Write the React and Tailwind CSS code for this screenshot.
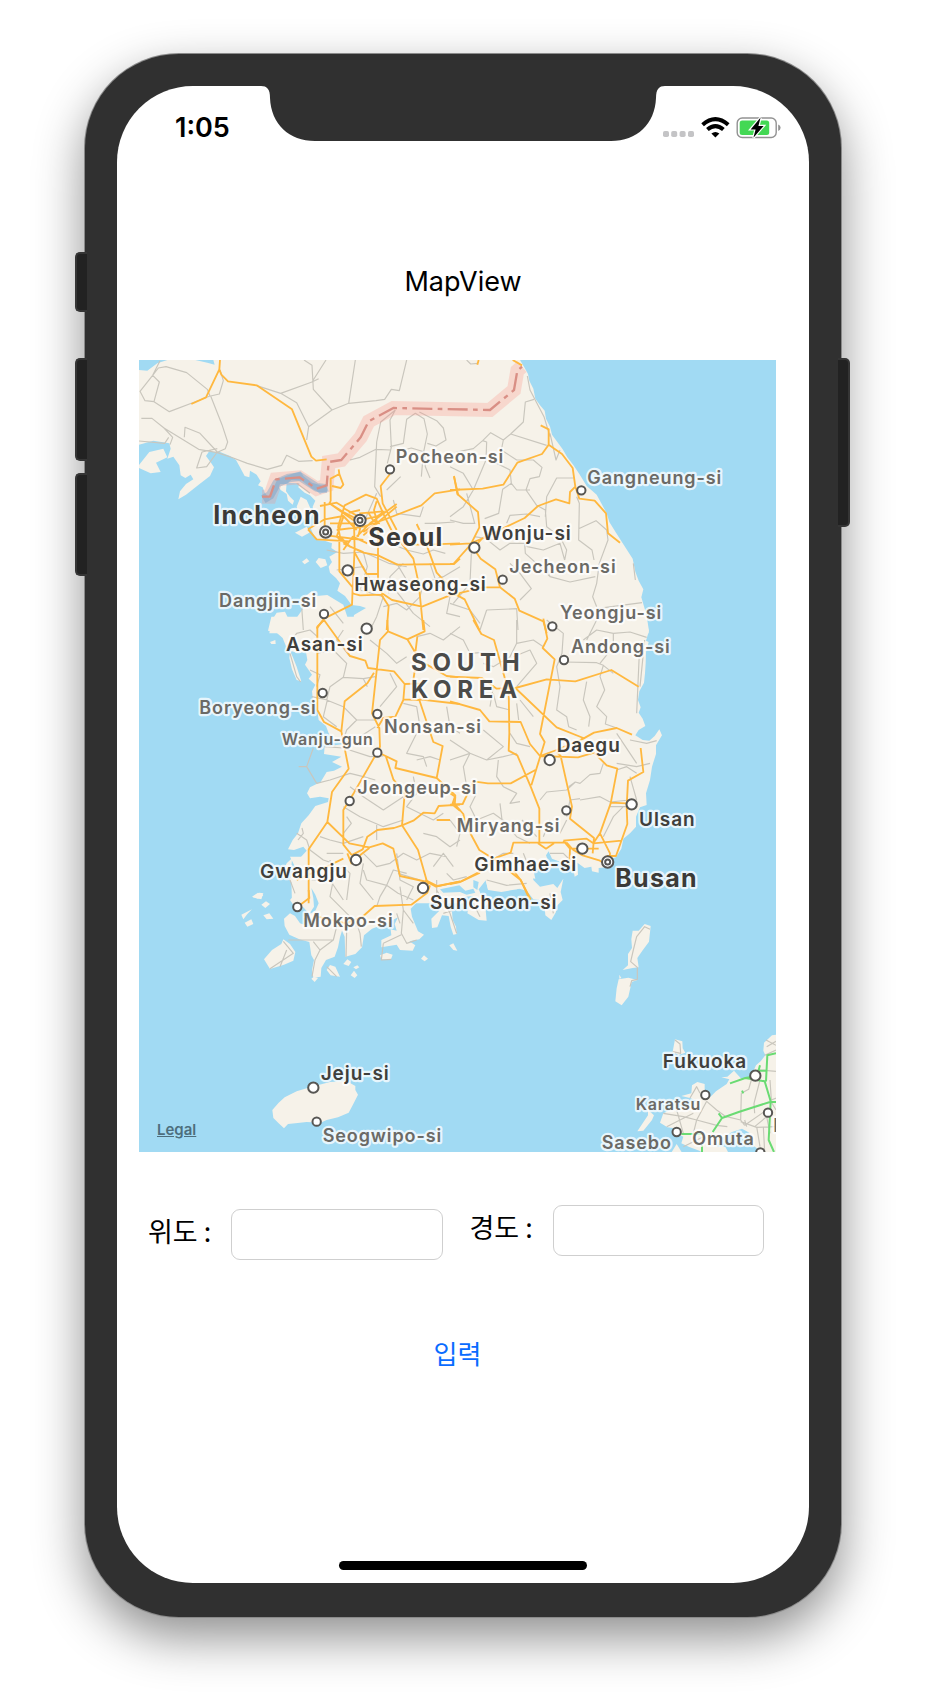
import React from "react";

const LAND = [
  // north-west and the capital area
  ["translate(0 0)", "M27 30H1000V850H418L425 812 440 788 465 785 478 812 500 803 520 775 512 750 545 724 560 738 592 735 640 764 655 810 670 812 672 795 708 774 690 768 665 765 645 738 622 722 630 700 618 684 600 668 596 650 606 636 598 620 622 606 604 594 606 580 584 572 560 570 548 548 540 530 560 516 556 500 548 470 556 452 540 436 524 428 505 412 508 400 470 398 468 424 480 440 492 452 488 464 474 452 470 432 452 420 440 400 430 430 420 446 405 430 398 412 384 406 392 394 380 374 360 362 358 382 344 378 330 352 318 330 300 318 270 306 236 306 228 318 244 340 252 352 240 378 206 404 168 434 145 448 150 424 168 402 190 388 182 374 166 384 152 376 148 346 130 320 112 326 122 296 118 280 70 272 27 284Z"],
  ["translate(0 0)", "M27 345L58 306 100 296 112 322 78 338 92 366 62 370 27 354ZM495 548L530 530 542 546 516 560ZM516 635L530 625 538 634 524 643ZM557 636L566 624 586 628 592 646 572 654ZM500 470L512 440 530 450 548 490 540 512 520 505 506 490Z"],
  // north-east
  ["translate(960 0)", "M0 30H210L222 50 234 72 238 92 250 116 256 146 270 166 284 182 288 206 300 230 306 254 322 276 338 298 352 322 370 345 388 372 410 408 440 434 453 458 470 490 478 516 498 548 522 586 548 626 556 665 566 692 580 718 574 742 588 790 596 850H0Z"],
  // mid-west
  ["translate(0 810)", "M1000 -10H424L414 32 440 38 458 54 470 84 486 94 500 98 528 96 532 120 525 134 546 164 536 176 556 194 546 214 548 232 560 262 566 300 588 318 596 340 612 358 640 372 584 380 582 402 634 410 606 426 636 440 612 452 590 456 572 486 540 502 531 520 540 535 570 530 596 535 594 546 556 558 536 586 514 610 504 640 488 660 474 688 492 690 520 680 530 692 508 716 504 736 520 752 500 770 484 780 486 850H1000ZM480 92L488 110 500 140 514 184 500 180 486 148 478 114ZM420 66L436 60 437 72 424 72ZM470 730L486 715 484 745 462 775 456 762ZM366 830L384 818 400 826 384 836Z"],
  // south-east
  ["translate(960 810)", "M0 -10H590L597 32 588 62 596 66 588 96 587 130 585 160 582 188 568 214 564 240 572 262 566 278 578 296 586 318 566 330 556 346 578 360 598 362 614 348 628 328 636 346 618 376 618 402 606 440 600 480 588 520 590 555 570 562 558 590 558 620 540 640 520 656 514 686 498 712 478 718 470 742 446 744 446 758 426 754 424 740 404 744 382 728 384 764 374 770 368 734 340 740 332 726 306 716 296 694 288 706 294 722 310 736 296 750 270 744 252 758 256 776 228 772 238 796 200 808 114 808 104 772 84 758 66 780 60 800 0 810Z"],
  // south coast
  ["translate(330 1530)", "M150 -10L165 20 148 60 170 80 166 102 150 120 160 134 190 142 206 160 190 172 208 180 210 200 180 190 165 168 150 160 132 176 134 198 148 224 178 238 208 246 214 286 222 300 216 330 220 353 242 350 244 324 258 300 284 290 294 262 300 232 306 212 314 230 316 290 346 282 366 262 372 226 396 206 440 190 474 172 464 192 470 212 452 208 454 226 424 240 424 262 470 254 480 270 518 272 526 256 508 244 538 238 552 224 534 214 524 190 516 170 512 146 540 118 566 100 590 120 598 152 574 176 576 204 592 202 606 166 626 168 632 200 640 224 650 222 648 200 638 180 636 156 620 134 640 120 660 136 676 110 700 108 688 130 682 160 716 180 740 182 736 140 756 112 724 106 716 88 738 60 744 90 784 96 838 86 860 92 880 118 900 120 914 140 916 166 934 180 948 156 948 140 968 120 962 96 970 56 952 84 940 72 900 80 880 60 870 -10Z"],
  ["translate(330 1530)", "M38 112L58 98 70 100 64 118ZM64 134L78 124 90 132 76 144ZM4 164L36 148 22 162 10 178ZM14 188L34 178 40 192 22 200ZM70 166L88 160 100 176 80 178ZM72 298L96 270 124 252 130 238 150 252 166 276 160 302 132 314 90 327ZM420 286L440 278 458 284 452 300 424 298ZM260 330L270 315 286 320 300 350 272 346ZM310 312L322 298 334 306 326 318ZM340 322L352 316 358 322 348 328ZM628 256L640 250 652 272 640 270ZM543 296L552 286 564 296 554 304ZM214 356L222 350 234 354 224 366ZM332 346L342 332 352 346 344 354Z"],
  // Jeju
  ["translate(0 1590)", "M427 690L446 668 464 652 500 634 545 620 600 606 650 603 676 618 676 630 684 644 668 676 656 698 624 712 590 720 572 728 530 726 496 730 474 732 462 745 446 730 430 714Z"],
  // Tsushima, Iki, Kyushu
  ["translate(960 1590)", "M548 152L566 152 584 132 602 138 597 185 577 212 562 234 566 262 548 264 518 270 534 256 534 222 546 204 544 178ZM506 298L535 293 562 300 545 306 535 350 515 376 496 364 500 325ZM508 284L514 294 508 296ZM668 515L675 478 697 484 698 505 706 518 686 525ZM980 464L966 466 942 488 940 512 946 526 932 544 918 556 900 596 874 596 852 572 832 590 814 592 838 598 830 612 798 634 780 652 764 640 764 612 742 606 726 616 724 640 694 648 720 654 740 662 710 680 662 690 640 700 630 728 652 742 668 744 680 760 700 770 694 790 716 800 748 812 760 820H836L826 800 800 800 812 776 846 756 876 746 898 758 902 790 922 806 940 820H980ZM562 754L574 736 594 706 594 690 612 706 606 720 580 752ZM664 818L680 792 696 818Z"],
];

const WATER = [
  ["translate(0 0)", "M27 30H112L82 40 52 62 27 60ZM196 30H250L254 44 232 38ZM420 446L432 410 442 388 478 374 512 364 520 378 546 398 590 410 596 424 574 430 546 416 516 392 484 390 470 402 450 402 436 440ZM545 410L585 424 570 432ZM652 -40L690 -40 672 -30Z"],
  ["translate(330 1530)", "M214 84L226 104 236 130 226 152 206 164 222 140 220 114ZM658 76L676 92 700 86 706 98 680 104 660 96 610 98 600 88ZM700 60L716 66 712 90 700 82Z"],
];

const MINOR = [
  ["translate(0 0)", "M85 54L108 50 170 68 232 118 240 138 200 154 118 185 72 155 45 152 30 124 68 76ZM68 76L88 96 72 155M90 32L68 76M270 60L280 92 268 132 242 138M242 138L276 224 293 276 286 296 264 306M34 205L66 205 102 234 128 262 120 284M27 273L104 280 116 262M102 234L206 298 262 308 310 324 352 340 412 358 455 346 470 316 506 334 548 332M163 262L165 232 210 250 262 306 230 350 200 354 216 306 262 296M378 106L452 130 500 158 536 230 606 180 656 160 738 152 764 148 784 118 808 122 830 30M452 130L546 96 588 30M522 30L546 46 550 118 606 180M656 160L676 30M536 230L530 270M546 96L566 86M796 180L752 216 740 276 734 410 752 440M796 180L780 210 784 292 772 340M780 290L820 280 830 208 856 190 882 206 892 252 880 310 874 380M868 186L920 212 940 234 948 270 918 288 892 280M660 330L690 322 738 298 782 300M820 300L844 294 884 306 886 350 900 384M700 520L740 430M770 420L812 380M880 470L870 500 800 490 790 450M884 520L912 520 974 516M780 580L830 600 880 612 910 600 946 610M590 600L640 610 700 606 776 640 830 650M620 660L700 650 720 688 780 700 812 740 850 790 900 830M700 606L712 650 690 720 760 740 740 800 720 840M800 640L830 690 880 700 940 680 990 650M880 700L870 740 830 780 800 760 760 770M900 640L920 700 960 740 950 790 990 800M820 640L780 680 776 730M600 770L640 820M515 770L520 840M500 400L540 430"],
  ["translate(960 0)", "M50 30L62 42 84 40M252 148L226 156 220 216 182 252 160 270 122 248 98 272 70 296 20 306M182 252L290 286M232 78L240 120 282 200 300 260M98 272L110 276 108 330 70 420M160 270L154 300 200 330 250 330 276 352 268 380 240 386 228 420 260 466 286 480 290 530 330 560 350 600 344 630M120 330L180 360 184 400 200 420 240 420M184 400L158 418 146 490 104 506M0 500L40 470 70 420 40 370 0 350M50 430L74 520M0 510L40 520 76 520M370 384L320 384 290 440 286 500M380 440L388 460 386 570 426 600 432 630M386 536L438 512 470 540 474 570 448 640 440 700 428 740 440 770M170 520L180 496 230 492 270 500M100 560L150 600 180 580 224 580 232 590 280 600 330 580 344 630 M224 580L226 610 270 650 300 680 360 696 436 680M300 680L290 650M180 640L210 670 244 716 210 750 M64 610L60 700 10 760M110 780L200 776 204 840M300 250L318 330 330 300M440 776L576 758M0 760L60 780 90 820M110 780L90 840M550 640L556 690 M72 560L140 570"],
  ["translate(0 810)", "M470 80L500 40 540 30 562 50M480 100L500 170 512 186M560 100L610 90 650 130 640 172 600 200 590 240 640 260 680 300 736 300M640 172L700 176 736 170M700 176L712 200M545 230L592 240 580 290 620 320M540 150L570 164 560 200M660 110L620 60 640 30M720 60L770 100 800 130 830 110M900 40L940 60 990 20M900 40L860 50M780 160L800 200 750 260M680 300L650 330 640 360M640 370L690 350 736 320M584 380L640 384 720 410 760 408M560 490L600 480 660 460 700 470 736 480M660 500L700 530 760 570 820 530M640 560L690 590 760 620 820 600M650 590L664 610 640 640M860 420L900 410 930 420M850 470L860 520 830 560 910 600 940 580M860 340L830 400 880 410 890 440M820 250L860 260 870 320M570 650L600 660 640 670 700 650M500 640L530 660 540 690 580 720 610 730M504 660L520 640 516 624M590 700L640 700M700 700L740 740 780 730 820 700 860 720 900 700 950 710M700 730L690 790 730 840M800 700L810 780 850 800 830 840M740 610L740 660M880 640L920 650 960 680 990 660M910 740L940 700 970 740M950 260L960 320 990 340M506 440L530 440 550 384M530 440L560 490M600 760L640 740 660 760 650 840M545 780L600 780 640 840"],
  ["translate(960 810)", "M0 40L40 60 60 100 130 95M200 0V70L180 110 130 140 100 130M200 70L250 60 280 80M290 0L340 40 336 100 320 140 330 200 320 270 350 290 356 320 380 330M340 126L440 128 460 136 490 160M400 60L440 30 490 40 490 80 450 130M490 40L540 36 590 52M440 0L410 60M460 136L450 170 464 210 440 260 470 290 466 312 500 324M410 185L400 240 420 290 416 320M568 100L560 280M584 60L570 200M130 220L140 260 180 270M190 110L240 90 260 130 200 200M210 240L250 290M200 250L206 300M180 340L200 370 240 380M100 330L160 380 110 420 60 400 0 360M60 400L40 440 50 500M110 420L160 410 200 400M145 420L140 470 160 500 200 520 180 550 210 545M0 420L60 400M80 520L60 560 80 600 130 580 200 630M270 540L290 516 350 510 376 486 356 500M376 486L390 490 420 464 450 460 460 430M390 540L450 530 480 546 540 540M350 590L360 540 390 536M330 640L350 600M280 650L300 600M500 430L560 440 600 430M500 450L530 440 560 460M540 360L590 370 620 362M500 340L540 400 560 430M480 560L530 560M460 650L490 590 520 560M150 550L156 600 200 650 240 670M216 600L260 650M300 700L340 700 360 720M20 680L30 640 0 600M110 730L160 700 190 700M540 470L560 540M220 700L240 750 320 740M130 200L120 260"],
  ["translate(330 1530)", "M370 30L380 60 440 76 474 100 520 120M270 0L280 60 270 110 330 170 350 200M440 76L420 110 410 140M474 40L540 60M440 76L460 30 500 40M620 40L640 60 680 50M480 80L490 150 520 190M480 190L470 160M145 240L280 240 290 200 340 200M220 245L240 270 225 300 216 350M280 240L240 270M320 210L318 290M350 190L360 220 364 260M490 150L484 220 500 250 530 240M430 250L484 224M430 250L424 300 454 298M590 60L590 130M610 160L640 150M700 130L720 170M740 60L800 76 860 70M930 100L940 160M130 244L160 280 90 326M140 270L120 320M150 60L165 100M260 320L290 350M590 90L630 160 650 220"],
  ["translate(960 1590)", "M600 148L584 140 560 170 550 210 542 245 562 262 562 298 545 302 540 320M675 480L690 492 692 520 668 515M948 480L978 496M944 526L978 510M905 596L930 570 978 574M950 500L978 484M960 600L964 660 990 650M874 640L872 720 884 736M874 640L896 628 904 600M930 600L912 670 914 700M720 654L740 620 750 640M770 664L800 690 830 712M740 720L800 736 832 740M740 720L730 760M640 700L700 710 740 720 770 664M650 740L730 700M680 690L700 760M872 720L830 710M884 736L950 690M884 720L890 740M914 740L950 710 960 760M920 740L930 800M940 740L944 816M872 725L920 742 978 740M960 660L978 690M700 800L760 770"],
];

const MAJOR = [
  ["translate(0 0)", "M184 162L228 142 268 58 270 30M268 58L274 74 294 94 380 106 486 178 544 320 558 332 590 328M626 358L628 372 602 386 602 454M628 372L640 404 632 414 606 408M602 454L598 460 640 486 690 512M570 468L620 458 640 470M584 456V546M534 538L560 568 660 574M534 538L584 508 640 498 680 540M624 530L644 466 708 434 740 446 764 500 784 540 850 626 866 700 880 840M780 372L752 408 758 460 800 540M598 460L690 524M624 530L630 560 660 590M600 520L680 520M590 556L700 570M620 540L700 530 760 510 874 466 914 430 990 418M800 462L720 520 680 560M740 454L732 480 742 520 700 556M688 490L760 484M716 490L730 512 750 520M672 520L674 600 M640 500L620 560 660 590 700 606M628 560V664L668 712 666 764 582 806 560 836M640 580L700 608 744 616 802 644 972 642 990 626M640 600L668 560 712 580M672 604L710 672 744 672 744 540M674 590L668 730 690 736 754 734 776 768 770 840M710 672L712 730M744 672V690L756 730 786 750 876 770 950 740 990 732M860 522L888 580 920 668 950 700M888 584L990 580M972 380L985 436M820 584L888 584M684 560L700 500M640 474L700 508 740 500 764 484M656 488L690 480M700 546L740 520 800 470"],
  ["translate(960 0)", "M86 30L82 44M188 30L216 46M272 226L296 238V284L276 312 202 338 160 404 98 416 0 420M296 284L336 312 368 354 376 410 388 446 434 452 468 490 474 550 510 578M376 410L360 426 358 460 318 448 264 468 224 504 96 566 74 590M12 378L22 432 84 486 88 532 62 584 10 642 0 642M0 584L62 580 100 564M74 600L92 626 136 658 150 712 194 746 208 782 280 814 290 850M150 712L100 712 50 724 0 736M18 734L44 748 88 840"],
  ["translate(0 810)", "M582 0L562 20V270L582 306 634 334 656 446 606 516 592 606 536 688V850M582 0L660 108 706 122 714 144 792 154 824 192 820 240 796 290 760 294 742 324M824 192L880 190M772 0L774 34 750 60 726 280 748 324 750 380 742 398M774 34L832 58 884 34 880 0M832 58L856 98 862 50M856 140L850 180M732 158L712 190 644 244 634 334M820 238L868 240 910 366 938 378 920 474 796 444 800 424 742 396 672 518 640 570V674L664 704M768 410L790 478 824 522 816 616 864 690 894 796M920 474L976 526 966 556M592 606L658 670 718 682 758 670 790 686 810 768 892 786 918 800 990 784M816 616L792 624 742 630 712 650 698 688 664 706M816 616L850 602 880 578 914 580 926 558 990 554M652 700L664 730 690 706 718 684M868 238L990 252M884 130L950 168 990 172M640 716L590 740 500 780M970 556L990 572M920 600H960"],
  ["translate(960 810)", "M70 0L94 42 132 60 166 180 176 206 178 340 176 392 202 406 242 500 268 566V670M280 -4L292 56 278 84 314 118 270 342 284 366 244 496M0 170L96 174 140 206 196 204 290 178 376 184 484 150 566 200M196 204L320 322 400 354 374 372M0 244L90 270 118 304 212 306 240 372 270 408M270 408L320 390 400 356 432 338 500 324 546 344M270 408L384 412 432 398M432 398L470 436 502 446 482 550 450 640 430 670M320 396L332 408 366 560 360 596 432 654 428 700M482 548L530 550M572 384L580 456 534 482 530 560 532 612 498 708 470 708M256 450L182 490 114 490 70 484 38 552 0 554M10 548L40 582 46 612 88 690 130 716 212 780 240 840M130 716L182 698 190 668 350 668M0 792L30 786 110 744 130 716M264 670L288 686 312 670 M340 662L410 656 430 670 514 662M350 668L370 690 398 706 450 722 470 736M340 662L360 686 358 740M360 686H446M450 640L480 700 478 730M0 520L16 530 14 556"],
  ["translate(330 1530)", "M206 90L208 114 176 138M370 168L404 138 514 134 562 98 570 76M318 190L370 168M230 170L318 190M820 32L842 60 872 118M556 60L592 78 664 64 720 38"],
];

const GREEN = "M840 610L886 594 908 590M886 594L944 604 962 664 956 780 972 816M978 520L952 526 948 604M930 556L918 600M948 572H920M978 666H960L866 696 816 714 788 756M816 714L806 700M694 762L760 762M756 816L756 796M880 640L876 632";

const BORDER = "M396 440L420 440 438 388 508 382 560 416 590 406 596 336 634 330 692 262 716 214 790 174 1080 180 1152 120 1162 62 1176 50";

const LABELS = [
  ["Incheon", 250, 521, "city"], ["Seoul", 715, 588, "city"], ["Busan", 1456, 1612, "city"],
  ["Pocheon-si", 797, 339, "minor"], ["Gangneung-si", 1372, 402, "minor"], ["Jecheon-si", 1138, 668, "minor"],
  ["Dangjin-si", 267, 770, "minor"], ["Yeongju-si", 1290, 808, "minor"], ["Andong-si", 1323, 908, "minor"],
  ["Boryeong-si", 208, 1092, "minor"], ["Nonsan-si", 762, 1150, "minor"], ["Jeongeup-si", 682, 1332, "minor"],
  ["Miryang-si", 980, 1445, "minor"], ["Mokpo-si", 520, 1730, "minor"], ["Seogwipo-si", 578, 2376, "minor"],
  ["Sasebo", 1415, 2398, "minor"], ["Omuta", 1687, 2386, "minor"], ["K", 1930, 2345, "minor"],
  ["Wanju-gun", 455, 1186, "small"], ["Karatsu", 1517, 2280, "small"],
  ["Wonju-si", 1057, 571, "town"], ["Hwaseong-si", 673, 724, "town"], ["Asan-si", 468, 903, "town"],
  ["Daegu", 1280, 1207, "town"], ["Ulsan", 1527, 1427, "town"], ["Gwangju", 390, 1585, "town"],
  ["Gimhae-si", 1033, 1563, "town"], ["Suncheon-si", 900, 1676, "town"], ["Jeju-si", 572, 2190, "town"],
  ["Fukuoka", 1598, 2155, "town"],
  ["SOUTH", 843, 963, "country"], ["KOREA", 843, 1043, "country"],
];

const LABEL_STYLE = {
  city: "fill-[#3b3a37] text-[75px] font-bold tracking-wider",
  town: "fill-[#403f3c] text-[57px] font-semibold tracking-wider",
  minor: "fill-[#6b6a66] text-[54px] font-semibold tracking-wider",
  small: "fill-[#6b6a66] text-[48px] font-semibold tracking-wider",
  country: "fill-[#4b4b49] text-[72px] font-bold tracking-[0.24em]",
};

const TOWNS = [[1033, 593], [1259, 1230], [653, 661], [710, 836], [1505, 1363], [1357, 1496], [678, 1530], [879, 1614], [550, 2213], [1876, 2177]];
const VILLAGES = [[780, 358], [1354, 421], [1118, 689], [582, 792], [1267, 829], [1302, 930], [578, 1029], [742, 1092], [742, 1208], [659, 1353], [1309, 1381], [502, 1671], [560, 2315], [1726, 2235], [1914, 2288], [1891, 2407], [1640, 2346]];
const CAPITALS = [[690, 511], [587, 546], [1433, 1536]];

function Layer({ shapes, ...rest }) {
  return (
    <g {...rest}>
      {shapes.map(([transform, d], i) => (
        <path key={i} transform={transform} d={d} />
      ))}
    </g>
  );
}

function KoreaMap() {
  return (
    <div className="relative w-full">
      <svg viewBox="27 30 1911 2376" role="img" aria-label="Map of South Korea" className="block h-auto w-full bg-[#a1daf3]">
        <Layer shapes={LAND} fill="#f6f2e9" />
        <Layer shapes={WATER} fill="#a1daf3" />
        <Layer shapes={MINOR} fill="none" stroke="#c9c6bd" strokeWidth="3.500" strokeLinejoin="round" />
        <g fill="none" strokeLinejoin="round">
          <path d={BORDER} stroke="#fb8a80" strokeOpacity="0.26" strokeWidth="42" strokeLinejoin="miter" />
          <path d="M400 448L420 436 440 400 476 384 510 380 560 412 592 416" stroke="#6f9cc4" strokeOpacity="0.4" strokeWidth="26" />
          <path d={BORDER} stroke="#d98f85" strokeWidth="7" strokeDasharray="60 16 14 16" />
        </g>
        <Layer shapes={MAJOR} fill="none" stroke="#ffb83f" strokeWidth="5.500" strokeLinejoin="round" />
        <path transform="translate(960 1590)" d={GREEN} fill="none" stroke="#6adb73" strokeWidth="6" strokeLinejoin="round" />
        <g fill="#fff" stroke="#575653">
          {TOWNS.map(([x, y]) => <circle key={x} cx={x} cy={y} r="15.500" strokeWidth="6" />)}
          {VILLAGES.map(([x, y]) => <circle key={`${x}-${y}`} cx={x} cy={y} r="12.500" strokeWidth="6" />)}
          {CAPITALS.map(([x, y]) => (
            <g key={x}>
              <circle cx={x} cy={y} r="17" strokeWidth="6" />
              <circle cx={x} cy={y} r="7.500" strokeWidth="6" />
            </g>
          ))}
        </g>
        <g stroke="#fff" strokeOpacity="0.75" strokeWidth="13" strokeLinejoin="round" style={{ paintOrder: "stroke" }}>
          {LABELS.map(([name, x, y, kind]) => (
            <text key={name} x={x} y={y} className={LABEL_STYLE[kind]}>{name}</text>
          ))}
        </g>
      </svg>
      <a href="#legal" className="absolute bottom-3 left-[18px] text-[15px] leading-5 font-semibold text-[#4d6e7d] underline">Legal</a>
    </div>
  );
}

function StatusIcons() {
  return (
    <svg viewBox="0 0 118 22" className="h-[22px] w-[118px]" aria-hidden="true">
      <g fill="#c4c4c6">
        <rect x="0" y="14" width="6" height="6" rx="1.800" />
        <rect x="8.200" y="14" width="6" height="6" rx="1.800" />
        <rect x="16.600" y="14" width="6" height="6" rx="1.800" />
        <rect x="25" y="14" width="6" height="6" rx="1.800" />
      </g>
      <g fill="none" stroke="#000" strokeWidth="4">
        <path d="M39.6 7.8Q52.4 -3.4 65.200 7.800" />
        <path d="M44.400 12.600Q52.400 5.600 60.400 12.600" />
      </g>
      <path d="M48.400 16.600Q52.400 13.400 56.400 16.600L52.400 20.600Z" />
      <rect x="74.200" y="1" width="39" height="19.500" rx="5" fill="none" stroke="#929292" strokeWidth="1.400" />
      <rect x="76.700" y="3.500" width="29.500" height="14.500" rx="2.500" fill="#43d854" />
      <path d="M115.200 7.600Q117.600 8.600 117.600 10.800T115.200 14Z" fill="#929292" />
      <path d="M97.600 0.600L87.600 12.400H92.600L90.400 20.800 100.600 9H95.400Z" fill="#000" stroke="#fff" strokeWidth="2.400" style={{ paintOrder: "stroke" }} />
    </svg>
  );
}

function CoordinateField({ id, label, className }) {
  return (
    <div className={`flex min-w-0 flex-1 items-start gap-5 ${className}`}>
      <label htmlFor={id} className="mt-1 shrink-0 font-['Noto_Sans_CJK_KR',sans-serif] text-[27px] leading-9">{label}</label>
      <input id={id} type="text" className="h-[51px] w-full min-w-0 rounded-[9px] border border-[#cfcfcf] bg-white px-3 text-2xl outline-none" />
    </div>
  );
}

export default function App() {
  return (
    <main className="flex min-h-screen justify-center overflow-hidden bg-white px-[85px] pt-[54px] pb-[85px] font-['Inter',sans-serif] text-black">
      <div className="relative w-full max-w-[756px] rounded-[94px] bg-[#303030] p-8 shadow-[0_0_0_1px_#8a8a8a,0_20px_50px_rgba(0,0,0,0.45)]">
        <span className="absolute top-[198px] -left-[10px] h-[60px] w-3 rounded-l-[5px] border-2 border-r-0 border-[#353535] bg-[#222]" />
        <span className="absolute top-[304px] -left-[10px] h-[103px] w-3 rounded-l-[5px] border-2 border-r-0 border-[#353535] bg-[#222]" />
        <span className="absolute top-[419px] -left-[10px] h-[103px] w-3 rounded-l-[5px] border-2 border-r-0 border-[#353535] bg-[#222]" />
        <span className="absolute top-[304px] -right-[9px] h-[169px] w-3 rounded-r-[5px] border-2 border-l-0 border-[#353535] bg-[#222]" />

        <div className="relative flex flex-col rounded-[76px] bg-white">
          <svg viewBox="0 0 404 55" className="absolute top-0 left-1/2 h-[55px] w-[404px] -translate-x-1/2" aria-hidden="true">
            <path d="M0 0C6 0 9 3 9 12C10 38 28 55 54 55H350C376 55 394 38 395 12C395 3 398 0 404 0Z" fill="#303030" />
          </svg>

          <header className="mt-[26px] flex h-8 items-center justify-between pr-7 pl-[58px]">
            <time className="text-[27px] leading-8 font-semibold">1:05</time>
            <StatusIcons />
          </header>

          <h1 className="mt-[120px] text-center text-[27px] leading-9">MapView</h1>

          <section className="mt-[60px] pr-[33px] pl-[22px]">
            <KoreaMap />
          </section>

          <form className="flex flex-col" onSubmit={(event) => event.preventDefault()}>
            <div className="mt-[53px] flex items-start gap-[27px] pr-[45px] pl-[31px]">
              <CoordinateField id="latitude" label="위도 :" className="mt-1" />
              <CoordinateField id="longitude" label="경도 :" className="" />
            </div>
            <div className="mt-[75px] flex justify-center pr-[33px] pl-[22px]">
              <button type="submit" className="font-['Noto_Sans_CJK_KR',sans-serif] text-[26px] leading-9 text-[#0a6cff]">입력</button>
            </div>
          </form>

          <div className="mx-auto mt-[190px] mb-[13px] h-[9px] w-[248px] rounded-full bg-black" />
        </div>
      </div>
    </main>
  );
}
